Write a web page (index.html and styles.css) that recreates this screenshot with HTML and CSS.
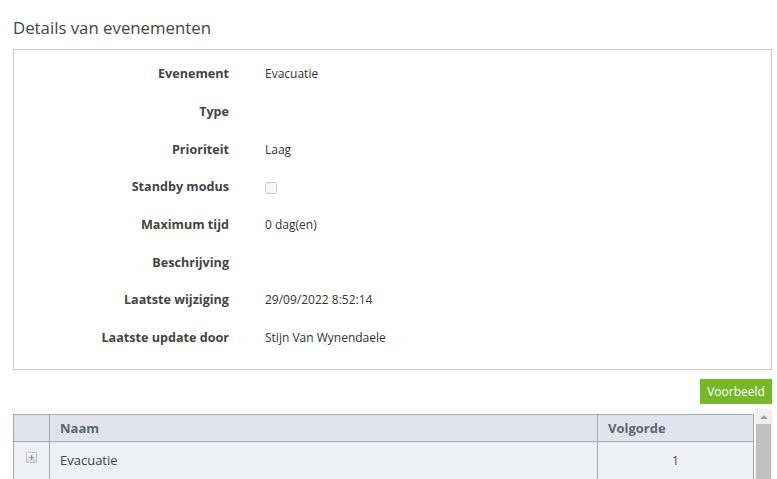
FILE: index.html
```html
<!DOCTYPE html>
<html lang="nl">
<head>
    <meta charset="UTF-8">
    <title>Details van evenementen</title>
    <link rel="stylesheet" href="styles.css">
</head>
<body>
    <div class="page">
        <h2 class="title">Details van evenementen</h2>
        <div class="panel">
            <div class="row"><span class="label">Evenement</span><span class="value">Evacuatie</span></div>
            <div class="row"><span class="label">Type</span><span class="value"></span></div>
            <div class="row"><span class="label">Prioriteit</span><span class="value">Laag</span></div>
            <div class="row"><span class="label">Standby modus</span><span class="value"><span class="check"></span></span></div>
            <div class="row"><span class="label">Maximum tijd</span><span class="value">0 dag(en)</span></div>
            <div class="row"><span class="label">Beschrijving</span><span class="value"></span></div>
            <div class="row"><span class="label">Laatste wijziging</span><span class="value">29/09/2022 8:52:14</span></div>
            <div class="row"><span class="label">Laatste update door</span><span class="value">Stijn Van Wynendaele</span></div>
        </div>
        <div class="actions">
            <button type="button" class="btn">Voorbeeld</button>
        </div>
        <div class="grid-wrap">
            <div class="grid-body">
                <table class="grid">
                    <tr>
                        <th class="c-exp"></th>
                        <th class="c-name">Naam</th>
                        <th class="c-order">Volgorde</th>
                    </tr>
                    <tr>
                        <td class="c-exp"><span class="plus">+</span></td>
                        <td class="c-name">Evacuatie</td>
                        <td class="c-order num">1</td>
                    </tr>
                </table>
            </div>
            <div class="scrollbar">
                <div class="arrow"></div>
                <div class="thumb"></div>
            </div>
        </div>
    </div>
</body>
</html>
```

FILE: styles.css
```css
/* Evenement details */
body {
    margin: 0;
    font-family: "Open Sans", Arial, sans-serif;
    color: #333;
    overflow: hidden;
}
.page {
    padding: 0 5px 0 13px;
}
.title {
    margin: 16px 0 9px;
    font-size: 16.8px;
    font-weight: normal;
    line-height: 24px;
    color: #444;
}
.panel {
    border: 1px solid #ccc;
    padding: 5px 0 12px;
}
.row {
    display: flex;
    align-items: center;
    height: 37.7px;
}
.label {
    width: 215px;
    text-align: right;
    font-size: 12.6px;
    font-weight: bold;
    color: #444;
}
.value {
    margin-left: 36px;
    font-size: 12px;
    color: #333;
}
.check {
    display: inline-block;
    width: 10px;
    height: 10px;
    border: 1px solid #ccc;
    border-radius: 2px;
    background: #f8f8f8;
    vertical-align: middle;
}
.actions {
    display: flex;
    justify-content: flex-end;
    padding-top: 9px;
}
.btn {
    width: 72px;
    height: 25px;
    padding: 0;
    background-color: #76b82a;
    color: #fff;
    border: none;
    font-family: "Open Sans", Arial, sans-serif;
    font-size: 12px;
    cursor: pointer;
}
.grid-wrap {
    display: flex;
    margin-top: 5px;
    height: 80px;
}
.grid-body {
    flex: 1;
    padding-top: 5px;
}
.grid {
    width: 100%;
    border-collapse: collapse;
    font-size: 13px;
}
.grid th,
.grid td {
    border: 1px solid #a3a7b2;
    padding: 0 10px;
    text-align: left;
}
.grid th {
    height: 26px;
    background-color: #e1e4ec;
    color: #5c6477;
    font-weight: bold;
}
.grid td {
    height: 40px;
    background-color: #eff0f5;
    color: #444;
    vertical-align: top;
    padding-top: 9px;
}
.grid .c-exp {
    width: 15px;
    text-align: center;
}
.grid .c-order {
    width: 135px;
}
.grid td.num {
    text-align: center;
    color: #555;
}
.plus {
    display: inline-block;
    width: 9px;
    height: 9px;
    line-height: 8px;
    font-size: 10px;
    color: #555;
    text-align: center;
    background: linear-gradient(#fafafa, #d8d8d8);
    border: 1px solid #c4c4c4;
    vertical-align: 4px;
}
.scrollbar {
    width: 17px;
    background-color: #f0f0f0;
    margin-left: 1px;
}
.arrow {
    width: 0;
    height: 0;
    margin: 6px auto 5px;
    border-left: 4px solid transparent;
    border-right: 4px solid transparent;
    border-bottom: 4px solid #a3a3a3;
}
.thumb {
    margin: 0 1px;
    height: 60px;
    background-color: #c1c1c1;
}
```
